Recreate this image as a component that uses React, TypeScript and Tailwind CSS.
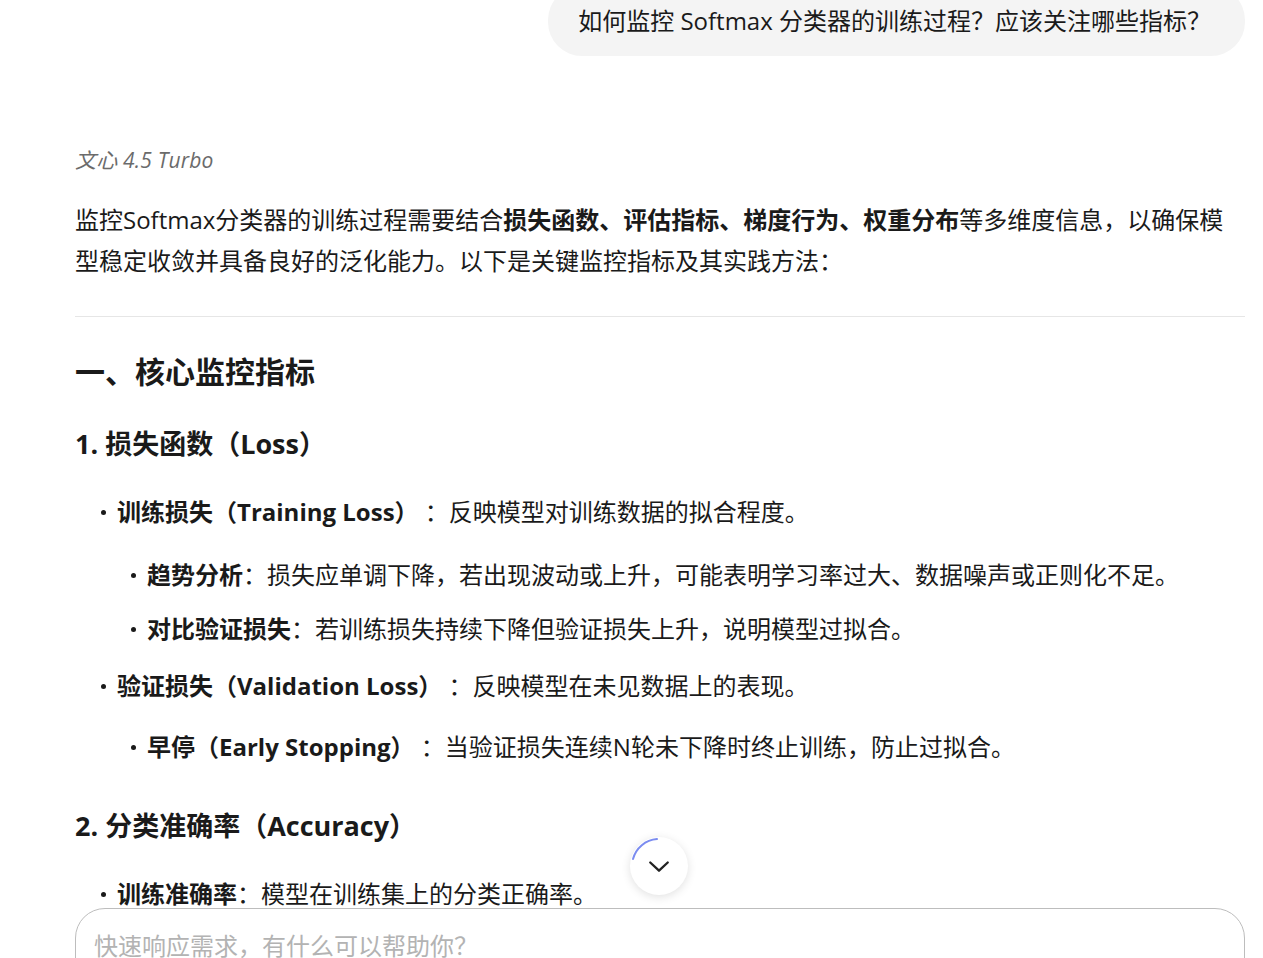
import React from 'react';

const font = "font-['Open_Sans','Noto_Sans_CJK_SC',sans-serif]";

function Dot() {
  return <span className="inline-block w-[5px] h-[5px] rounded-full bg-[#1a1a1a] shrink-0" />;
}

function Item({ nested, className, children }: { nested?: boolean; className?: string; children: React.ReactNode }) {
  return (
    <li className={`flex items-center h-[36px] ${nested ? 'pl-[56px]' : 'pl-[26px]'} ${className ?? ''}`}>
      <Dot />
      <span className="ml-[11px] whitespace-nowrap">{children}</span>
    </li>
  );
}

export default function App() {
  return (
    <div className={`relative h-[958px] overflow-hidden bg-white text-[#1a1a1a] ${font}`}>
      <div className="pl-[75px] pr-[18px]">
        {/* question bubble */}
        <div className="flex justify-end">
          <div className="mt-[-14px] h-[70px] flex items-center pl-[30px] pr-[34px] rounded-[34px] bg-[#f4f4f4] text-[24px]">
            如何监控 Softmax 分类器的训练过程？应该关注哪些指标？
          </div>
        </div>

        <div className="mt-[90px] h-[28px] leading-[28px] text-[21px] italic text-[#6b6b6b] tracking-[0.2px]">文心 4.5 Turbo</div>

        <p className="mt-[25px] text-[24px] leading-[41px]">
          监控Softmax分类器的训练过程需要结合<b>损失函数、评估指标、梯度行为、权重分布</b>等多维度信息，以确保模型稳定收敛并具备良好的泛化能力。以下是关键监控指标及其实践方法：
        </p>

        <hr className="mt-[35px] border-0 h-px bg-[#e6e6e6]" />

        <h2 className="mt-[35px] h-[40px] leading-[40px] text-[30px] font-bold">一、核心监控指标</h2>

        <h3 className="mt-[34px] h-[36px] leading-[36px] text-[27px] font-bold">1. 损失函数（Loss）</h3>

        <ul className="text-[24px]">
          <Item className="mt-[32px]">
            <b>训练损失（Training Loss）</b> ：反映模型对训练数据的拟合程度。
          </Item>
          <Item nested className="mt-[27px]">
            <b>趋势分析</b>：损失应单调下降，若出现波动或上升，可能表明学习率过大、数据噪声或正则化不足。
          </Item>
          <Item nested className="mt-[18px]">
            <b>对比验证损失</b>：若训练损失持续下降但验证损失上升，说明模型过拟合。
          </Item>
          <Item className="mt-[21px]">
            <b>验证损失（Validation Loss）</b> ：反映模型在未见数据上的表现。
          </Item>
          <Item nested className="mt-[25px]">
            <b>早停（Early Stopping）</b> ：当验证损失连续N轮未下降时终止训练，防止过拟合。
          </Item>
        </ul>

        <h3 className="mt-[43px] h-[36px] leading-[36px] text-[27px] font-bold">2. 分类准确率（Accuracy）</h3>

        <ul className="text-[24px]">
          <Item className="mt-[32px]">
            <b>训练准确率</b>：模型在训练集上的分类正确率。
          </Item>
        </ul>
      </div>

      {/* scroll-to-bottom button */}
      <button className="absolute left-[630px] top-[837px] w-[58px] h-[58px] rounded-full bg-white shadow-[0_2px_10px_rgba(0,0,0,0.12)] flex items-center justify-center">
        <svg className="absolute inset-0" width="58" height="58" viewBox="0 0 58 58">
          <path d="M3 22 A27 27 0 0 1 27 2" fill="none" stroke="#7b8cf0" strokeWidth="2" strokeLinecap="round" />
        </svg>
        <svg width="28" height="28" viewBox="0 0 24 24" fill="none" stroke="#222" strokeWidth="2" strokeLinecap="round" strokeLinejoin="round">
          <path d="M4.5 9l7.5 7 7.5-7" />
        </svg>
      </button>

      {/* input box */}
      <div className="absolute left-[75px] right-[18px] top-[908px] h-[120px] rounded-[30px] border border-[#bdbdbd] bg-white pl-[18px] pt-[20px]">
        <div className="text-[24px] leading-[34px] text-[#b3b3b3]">快速响应需求，有什么可以帮助你？</div>
      </div>
    </div>
  );
}
